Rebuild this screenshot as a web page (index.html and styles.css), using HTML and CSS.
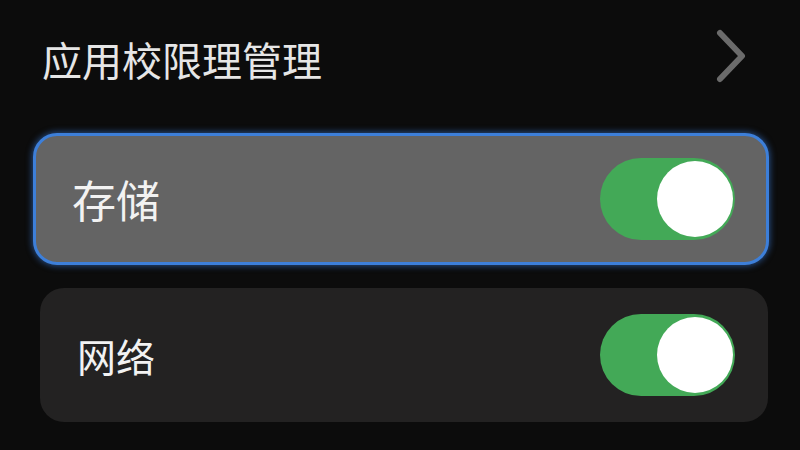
FILE: index.html
```html
<!DOCTYPE html>
<html lang="zh-CN">
<head>
<meta charset="utf-8">
<title>应用校限理管理</title>
<link rel="stylesheet" href="styles.css">
</head>
<body>
<div class="screen">
  <div class="header">
    <div class="title">应用校限理管理</div>
    <svg class="chevron" width="34" height="58" viewBox="0 0 34 58">
      <path d="M6 5 L28 28 L6 51" fill="none" stroke="#6b6b6b" stroke-width="6" stroke-linecap="round" stroke-linejoin="round"/>
    </svg>
  </div>
  <div class="card card-focus">
    <div class="label label-big">存储</div>
    <div class="toggle"><div class="knob"></div></div>
  </div>
  <div class="card card-plain">
    <div class="label label-small">网络</div>
    <div class="toggle"><div class="knob"></div></div>
  </div>
</div>
</body>
</html>
```
FILE: styles.css
```css
html, body {
  margin: 0;
  padding: 0;
  background: #0c0c0c;
}
.screen {
  width: 800px;
  height: 450px;
  display: flex;
  flex-direction: column;
  font-family: "Noto Sans CJK SC", "Noto Sans", sans-serif;
  overflow: hidden;
}
.header {
  display: flex;
  align-items: center;
  justify-content: space-between;
  height: 58px;
  margin-top: 28px;
  padding: 0 52px 0 42px;
}
.title {
  color: #e6e6e6;
  font-size: 40px;
  line-height: 58px;
  margin-top: 4px;
}
.chevron {
  display: block;
}
.card {
  display: flex;
  align-items: center;
  justify-content: space-between;
  box-sizing: border-box;
  border-radius: 24px;
}
.card-focus {
  margin: 47px 31px 0 33px;
  height: 132px;
  background: #646464;
  border: 3px solid #3d7fd9;
  box-shadow: 0 0 6px 1px rgba(60, 130, 230, 0.55);
  padding: 0 31px 0 36px;
}
.card-plain {
  margin: 23px 32px 0 40px;
  height: 134px;
  background: #232222;
  padding: 0 33px 0 37px;
}
.label {
  color: #f2f2f2;
}
.label-big {
  font-size: 44px;
}
.label-small {
  font-size: 39px;
}
.toggle {
  width: 135px;
  height: 82px;
  border-radius: 41px;
  background: #43a957;
  display: flex;
  justify-content: flex-end;
  align-items: center;
  padding-right: 2px;
  box-sizing: border-box;
}
.knob {
  width: 76px;
  height: 76px;
  border-radius: 50%;
  background: #ffffff;
}
```
